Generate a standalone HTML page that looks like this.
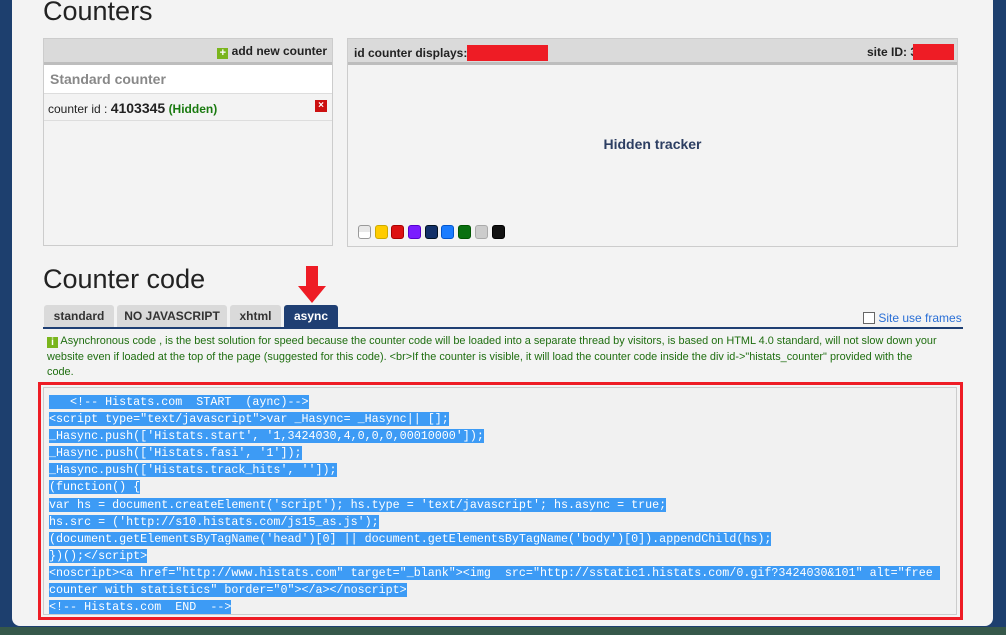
<!DOCTYPE html>
<html><head><meta charset="utf-8"><style>
*{margin:0;padding:0;box-sizing:border-box}
body{width:1006px;height:635px;overflow:hidden;background:#1d3f6e;font-family:"Liberation Sans",sans-serif;position:relative}
.page{position:absolute;left:12px;top:-10px;width:981px;height:636px;background:#f3f3f3;border-radius:0 0 8px 8px}
.abs{position:absolute}
h1{position:absolute;font-weight:normal;font-size:27px;color:#222;left:43px}
.panel{position:absolute;border:1px solid #ccc;background:#f3f3f3}
.ph{height:26px;background:#dadada;border-bottom:3px solid #bdbdbd;font-size:12px;font-weight:bold;color:#222}
.tab{position:absolute;top:305px;height:22px;background:#dadada;color:#333;font-size:12px;font-weight:bold;text-align:center;line-height:23px;border-radius:3px 3px 0 0}
pre{font-family:"Liberation Mono",monospace;font-size:11.7px;line-height:17.1px;color:#fff}
pre span{background:#3d9bf5}
.sw{display:inline-block;width:13px;height:14px;border-radius:3px;margin-right:3.7px;border:1px solid #999}
</style></head><body>
<div class="page"></div>
<div class="abs" style="left:0;top:627px;width:1006px;height:8px;background:#36584a"></div>
<h1 style="top:-4px">Counters</h1>
<div class="panel" style="left:43px;top:38px;width:290px;height:208px">
 <div class="ph" style="text-align:right;padding:5px 5px 0 0"><span style="display:inline-block;width:11px;height:11px;background:#7ab51d;color:#fff;font-size:11px;line-height:10px;text-align:center;vertical-align:-1px">+</span> add new counter</div>
 <div style="background:#fff;height:29px;border-bottom:1px solid #ddd;padding:6px 6px;font-size:14px;font-weight:bold;color:#888">Standard counter</div>
 <div style="height:27px;border-bottom:1px solid #ddd;padding:6px 4px;font-size:12px;color:#222;position:relative">counter id : <b style="font-size:14px">4103345</b> <b style="color:#1a7a10;font-size:12px">(Hidden)</b><span style="position:absolute;right:5px;top:6px;width:12px;height:12px;background:#cc1010;color:#fff;font-size:10px;line-height:12px;text-align:center;font-weight:bold">×</span></div>
</div>
<div class="panel" style="left:347px;top:38px;width:611px;height:209px">
 <div class="ph" style="padding:6px 6px 0;position:relative">id counter displays:<span style="display:inline-block;width:81px;height:16px;background:#ee1c25;vertical-align:-4px"></span><span style="position:absolute;right:3px;top:5px">site ID: 3<span style="display:inline-block;width:41px;height:16px;background:#ee1c25;vertical-align:-4px;margin-left:-4px"></span></span></div>
 <div style="position:absolute;top:97px;width:100%;text-align:center;font-size:14px;font-weight:bold;color:#2c3e62">Hidden tracker</div>
 <div style="position:absolute;left:10px;top:186px">
 <span class="sw" style="background:linear-gradient(#e8e8e8 50%,#fff 50%)"></span><span class="sw" style="background:#fc0;border-color:#ca0"></span><span class="sw" style="background:#d11;border-color:#a00"></span><span class="sw" style="background:#7a1cff;border-color:#50c"></span><span class="sw" style="background:#123068;border-color:#012"></span><span class="sw" style="background:#1a7cff;border-color:#05c"></span><span class="sw" style="background:#0a7010;border-color:#050"></span><span class="sw" style="background:#ccc;border-color:#aaa"></span><span class="sw" style="background:#111;border-color:#000"></span></div>
</div>
<h1 style="top:264px">Counter code</h1>
<svg class="abs" style="left:298px;top:266px" width="28" height="38"><polygon points="8,0 20,0 20,20 28,20 14,37 0,20 8,20" fill="#ee1c25"/></svg>
<div class="tab" style="left:44px;width:70px">standard</div>
<div class="tab" style="left:117px;width:110px">NO JAVASCRIPT</div>
<div class="tab" style="left:230px;width:51px">xhtml</div>
<div class="tab" style="left:284px;width:54px;background:#1f3f73;color:#fff">async</div>
<div class="abs" style="left:43px;top:327px;width:920px;height:2px;background:#1f3f73"></div>
<div class="abs" style="left:863px;top:311px;font-size:12px;color:#2a6fd6"><span style="display:inline-block;width:12px;height:12px;border:1px solid #666;background:#fff;vertical-align:-2px"></span> Site use frames</div>
<div class="abs" style="left:47px;top:334px;width:893px;font-size:10.9px;line-height:15.5px;color:#1f6e10"><span style="display:inline-block;width:11px;height:11px;background:#7ab51d;color:#fff;font-size:10px;line-height:11px;text-align:center;font-weight:bold;vertical-align:-1px">i</span> Asynchronous code , is the best solution for speed because the counter code will be loaded into a separate thread by visitors, is based on HTML 4.0 standard, will not slow down your website even if loaded at the top of the page (suggested for this code). &lt;br&gt;If the counter is visible, it will load the counter code inside the div id-&gt;"histats_counter" provided with the code.</div>
<div class="abs" style="left:38px;top:382px;width:925px;height:238px;border:3px solid #ee1c25"></div>
<div class="abs" style="left:43px;top:387px;width:914px;height:228px;border:1px solid #ccc;background:#f1f1f1;padding:6px 0 0 5px">
<pre><span>   &lt;!-- Histats.com  START  (aync)--&gt;</span>
<span>&lt;script type="text/javascript"&gt;var _Hasync= _Hasync|| [];</span>
<span>_Hasync.push(['Histats.start', '1,3424030,4,0,0,0,00010000']);</span>
<span>_Hasync.push(['Histats.fasi', '1']);</span>
<span>_Hasync.push(['Histats.track_hits', '']);</span>
<span>(function() {</span>
<span>var hs = document.createElement('script'); hs.type = 'text/javascript'; hs.async = true;</span>
<span>hs.src = ('http://s10.histats.com/js15_as.js');</span>
<span>(document.getElementsByTagName('head')[0] || document.getElementsByTagName('body')[0]).appendChild(hs);</span>
<span>})();&lt;/script&gt;</span>
<span>&lt;noscript&gt;&lt;a href="http://www.histats.com" target="_blank"&gt;&lt;img  src="http://sstatic1.histats.com/0.gif?3424030&amp;101" alt="free </span>
<span>counter with statistics" border="0"&gt;&lt;/a&gt;&lt;/noscript&gt;</span>
<span>&lt;!-- Histats.com  END  --&gt;</span></pre>
</div>
</body></html>
